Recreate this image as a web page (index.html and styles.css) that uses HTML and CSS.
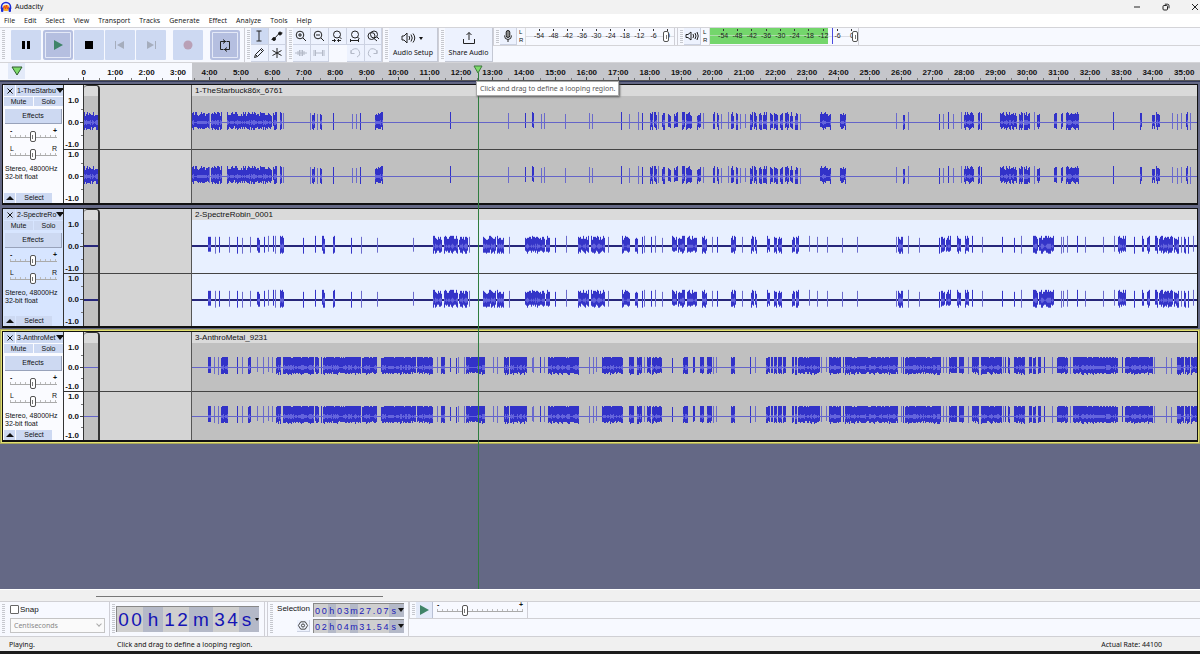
FILE: index.html
```html
<!DOCTYPE html>
<html lang="en">
<head>
<meta charset="utf-8">
<title>Audacity</title>
<link rel="stylesheet" href="styles.css">
</head>
<body>
<div class="app">
  <header class="titlebar">
    <svg class="logo" viewBox="0 0 12 12"><path d="M1.5 8V6a4.5 4.5 0 0 1 9 0v2" fill="none" stroke="#1b2bd8" stroke-width="1.6"/><rect x="3" y="4" width="6" height="6" rx="2" fill="#f7a821"/><path d="M3.5 7l1-2 1 3 1-4 1 4 1-2" stroke="#e8431c" stroke-width="1" fill="none"/><rect x="1" y="6.500" width="2.400" height="4.500" rx="1" fill="#1b2bd8"/><rect x="8.600" y="6.500" width="2.400" height="4.500" rx="1" fill="#1b2bd8"/></svg>
    <span class="apptitle">Audacity</span>
    <div class="winbtns">
      <button aria-label="Minimize"><svg viewBox="0 0 8 8"><path d="M1 4h6" /></svg></button>
      <button aria-label="Restore"><svg viewBox="0 0 8 8"><rect x="1" y="2.500" width="4.500" height="4.500" rx="1"/><path d="M2.800 1.200h2.700q1.500 0 1.500 1.500v2.600"/></svg></button>
      <button aria-label="Close"><svg viewBox="0 0 8 8"><path d="M1 1l6 6M7 1l-6 6"/></svg></button>
    </div>
  </header>
  <nav class="menu">
    <button>File</button><button>Edit</button><button>Select</button><button>View</button><button>Transport</button><button>Tracks</button><button>Generate</button><button>Effect</button><button>Analyze</button><button>Tools</button><button>Help</button>
  </nav>

  <section class="toolbars">
    <div class="grip first"></div>
    <div class="transport">
      <button class="tbtn" aria-label="Pause"><svg viewBox="0 0 30 30"><path d="M11 11h3v8h-3zM16 11h3v8h-3z"/></svg></button>
      <button class="tbtn on" aria-label="Play"><svg viewBox="0 0 30 30"><path d="M11 10l9 5-9 5z" fill="#3f8468"/></svg></button>
      <button class="tbtn" aria-label="Stop"><svg viewBox="0 0 30 30"><path d="M11 11h8v8h-8z"/></svg></button>
      <button class="tbtn" aria-label="Skip to start"><svg viewBox="0 0 30 30"><path d="M19 11v8l-7-4zM10 11h1v8h-1z" fill="#a5adbd"/></svg></button>
      <button class="tbtn" aria-label="Skip to end"><svg viewBox="0 0 30 30"><path d="M11 11v8l7-4zM19 11h1v8h-1z" fill="#a5adbd"/></svg></button>
      <button class="tbtn rec" aria-label="Record"><svg viewBox="0 0 30 30"><circle cx="15" cy="15" r="4.500" fill="#b9a0b6"/></svg></button>
      <button class="tbtn on loop" aria-label="Loop"><svg viewBox="0 0 30 30" fill="none" stroke="#222" stroke-width="1"><path d="M14 19.500h5.500v-8h-3M16 11.500h-5.500v8h3M13 9.500l2.500 2-2.500 2M17 17.500l-2.500 2 2.500 2"/></svg></button>
    </div>
    <div class="grip"></div>
    <div class="tools two">
      <button class="ic sel" aria-label="Selection tool"><svg viewBox="0 0 16 16"><path d="M5.500 3h5M5.500 13h5M8 3v10"/></svg></button>
      <button class="ic" aria-label="Envelope tool"><svg viewBox="0 0 16 16"><path d="M2.500 11.500h2l6-6.500h3"/><circle cx="5" cy="11" r="1.500" fill="#111"/><circle cx="11" cy="5.500" r="1.500" fill="#111"/></svg></button>
      <button class="ic" aria-label="Draw tool"><svg viewBox="0 0 16 16"><path d="M3.500 12.500l1-3 6-6 2 2-6 6zM9.500 4.500l2 2M4.500 9.500l2 2"/></svg></button>
      <button class="ic" aria-label="Multi-tool"><svg viewBox="0 0 16 16"><path d="M8 3v10M3.500 5.500l9 5M12.500 5.500l-9 5"/></svg></button>
    </div>
    <div class="grip"></div>
    <div class="tools five">
      <button class="ic" aria-label="Zoom in"><svg viewBox="0 0 16 16"><circle cx="7" cy="7" r="3.800"/><path d="M10 10l3 3M5 7h4M7 5v4"/></svg></button>
      <button class="ic" aria-label="Zoom out"><svg viewBox="0 0 16 16"><circle cx="7" cy="7" r="3.800"/><path d="M10 10l3 3M5 7h4"/></svg></button>
      <button class="ic" aria-label="Fit selection"><svg viewBox="0 0 16 16"><circle cx="8" cy="6.500" r="3.500"/><path d="M10.500 9l2 2M3 12.500h3.500M8.500 12.500H12M5 11l1.500 1.500L5 14M10 11l-1.500 1.500L10 14"/></svg></button>
      <button class="ic" aria-label="Fit project"><svg viewBox="0 0 16 16"><circle cx="8" cy="6.500" r="3.500"/><path d="M10.500 9l2 2M3 12.500h9M3.500 11v3M11.500 11v3"/></svg></button>
      <button class="ic" aria-label="Zoom toggle"><svg viewBox="0 0 16 16"><circle cx="9" cy="6.500" r="3.500"/><circle cx="6.500" cy="8" r="3.500"/><path d="M9 10.500l3 2.500M12 9l2 2"/></svg></button>
      <button class="ic dim" aria-label="Trim"><svg viewBox="0 0 16 16"><path d="M2 8h12M5 6v4M6.500 5v6M8 5v6M9.500 5v6M11 6v4"/></svg></button>
      <button class="ic dim" aria-label="Silence"><svg viewBox="0 0 16 16"><path d="M3 5v6M4.500 5v6M5 8h6M11.500 5v6M13 5v6"/></svg></button>
      <span></span>
      <button class="ic dim" aria-label="Undo"><svg viewBox="0 0 16 16"><path d="M4 5v3.500h3.500M4 8.500a4.300 4.300 0 1 1 6 3.500"/></svg></button>
      <button class="ic dim" aria-label="Redo"><svg viewBox="0 0 16 16"><path d="M12 5v3.500H8.500M12 8.500a4.300 4.300 0 1 0-6 3.500"/></svg></button>
    </div>
    <div class="grip"></div>
    <button class="big"><svg viewBox="0 0 26 14"><path d="M2 5h2l3-3v10l-3-3h-2zM9 5q1.500 2 0 4M11 3.500q2.500 3.500 0 7M13 2.500q3.500 4.500 0 9"/><path d="M19 6h4l-2 3z" fill="#111" stroke="none"/></svg>Audio Setup</button>
    <div class="grip"></div>
    <button class="big share"><svg viewBox="0 0 26 14"><path d="M7.500 8v4.500h11V8M13 9V1.500M10.500 4l2.500-2.500L15.500 4"/></svg>Share Audio</button>
    <div class="meters">
      <div class="meterrow">
        <div class="grip"></div>
        <button class="ic mic" aria-label="Record meter"><svg viewBox="0 0 16 16"><rect x="6.200" y="2.500" width="3.600" height="7" rx="1.800" fill="#888"/><path d="M4.500 7.500q0 4 3.500 4t3.500-4M8 11.500V14"/></svg></button>
        <div class="lr"><span>L</span><span>R</span></div>
        <div class="meter"><div class="scale"></div><input type="range" class="mthumb" aria-label="Recording level" value="100"></div>
        <div class="edge"></div>
        <div class="grip"></div>
        <button class="ic mic" aria-label="Playback meter"><svg viewBox="0 0 16 16"><path d="M2 6.500h2l3-2.500v8L4 9.500H2zM9 6q1.200 2 0 4M11 5q2 3 0 6M13 4q2.500 4 0 8"/></svg></button>
        <div class="lr"><span>L</span><span>R</span></div>
        <div class="meter play"><div class="level"></div><div class="peak"></div><div class="scale"></div><input type="range" class="mthumb" aria-label="Playback level" value="100"></div>
        <div class="edge"></div>
      </div>
    </div>
  </section>

  <section class="ruler">
    <button class="pin" aria-label="Timeline options"><svg viewBox="0 0 12 10"><path d="M1 1h10L6 9z" fill="#7edb6b" stroke="#2e5c2e"/></svg></button>
    <div class="rfill"></div>
    <div class="marks" id="marks"></div>
  </section>

  <main class="tracks" id="tracks">
    <div class="cursor"><svg viewBox="0 0 10 9"><path d="M1 1h8L5 8z" fill="#7edb6b" stroke="#3d7a3d"/></svg></div>
    <div class="tooltip">Click and drag to define a looping region.</div>
  </main>

  <div class="hscroll"><div></div></div>

  <section class="bottom">
    <div class="grip first"></div>
    <div class="snap">
      <label><input type="checkbox">Snap</label>
      <div class="pick"><select disabled aria-label="Snap to"><option>Centiseconds</option></select></div>
    </div>
    <div class="grip"></div>
    <div class="bigtime"><span>0</span><span>0</span><span class="u">h</span><span>1</span><span>2</span><span class="u m">m</span><span>3</span><span>4</span><span class="u s">s</span><span class="arr"></span></div>
    <div class="edge"></div>
    <div class="grip"></div>
    <div class="seltb">
      <div class="sellab"><span>Selection</span><button aria-label="Selection settings"><svg viewBox="0 0 12 12"><path d="M3.500 2h5L11 6 8.500 10h-5L1 6z"/><circle cx="6" cy="6" r="1.700"/></svg></button></div>
      <div class="seltimes"><div class="time" data-t="00h03m27.07s"></div><div class="time" data-t="02h04m31.54s"></div></div>
    </div>
    <div class="speed">
      <div class="speedrow">
        <div class="grip"></div>
        <button aria-label="Play at speed"><svg viewBox="0 0 16 16"><path d="M4 3l9 5-9 5z" fill="#3f8468"/></svg></button>
        <div class="slide sp"><div class="ends"><span>-</span><span>+</span></div><input type="range" value="31" aria-label="Playback speed"></div>
        <div class="edge"></div>
      </div>
    </div>
  </section>
  <footer class="status"><span class="st1">Playing.</span><span class="st2">Click and drag to define a looping region.</span><span class="rate">Actual Rate: 44100</span></footer>
  <div class="strip"></div>
</div>
<script src="app.js"></script>
</body>
</html>
```
FILE: styles.css
```css
*, *::before, *::after { box-sizing: border-box; }
body { margin: 0; font: 8px/10px "Liberation Sans", Arial, sans-serif; color: #111; }
button { font: inherit; color: inherit; border: 0; padding: 0; margin: 0; background: none; }
svg { display: block; }
input { margin: 0; }
.app { display: flex; flex-direction: column; min-height: 100vh; overflow: hidden; background: #f0f0f0; }

.titlebar { display: flex; align-items: center; height: 14px; background: #f2f2f2; font: 7px/14px "Noto Sans", sans-serif; }
.logo { width: 12px; height: 12px; margin-right: 3px; }
.apptitle { flex: 1; }
.winbtns { display: flex; gap: 21px; padding-right: 1px; }
.winbtns svg { width: 8px; height: 8px; fill: none; stroke: #222; stroke-width: 1; }
.menu { display: flex; gap: 9px; height: 13px; padding-left: 4px; background: #fff; font: 7px/13px "Open Sans", sans-serif; }

.toolbars { display: flex; height: 36px; background: #f7f9ff; border-top: 1px solid #d4d4d8; border-bottom: 1px solid #d4d4d8; }
.grip { flex: none; width: 7px; border-left: 1px solid #cfcfd6; background: repeating-linear-gradient(#c6c8ce 0 1px, #f7f9ff 1px 2px) 2px 2px / 3px calc(100% - 4px) no-repeat; }
.grip.first { border-left: 0; }
.edge { flex: none; width: 3px; border-left: 1px solid #cfcfd6; }
.transport { display: flex; gap: 1px; padding: 2px 4px; align-items: center; }
.tbtn { width: 30px; height: 30px; background: #cdd9f2; border-radius: 1px; }
.tbtn:first-child { margin-right: 1px; }
.tbtn.on { background: #b5bfe0; box-shadow: inset 0 0 0 2px #b5bfe0, inset 0 0 0 3px #e4e9f7; border-radius: 3px; }
.tbtn.rec { margin: 0 5px 0 6px; }
.tbtn.loop { margin-left: 1px; }
.tools { display: grid; grid-auto-rows: 17px; }
.two { grid-template-columns: 18px 17px; }
.five { grid-template-columns: repeat(4, 18px) 17px; }
.ic { background: #edf2fe; border-right: 1px solid #ccd2e2; border-bottom: 1px solid #ccd2e2; }
.ic svg { width: 16px; height: 16px; fill: none; stroke: #222; stroke-width: 1; }
.ic.sel { background: #cdd9f2; }
.ic.dim svg { stroke: #b4bac8; }
.big { flex: none; width: 49px; display: flex; flex-direction: column; align-items: center; justify-content: space-evenly; background: #edf2fe; border-right: 1px solid #c4c8d4; border-bottom: 1px solid #c4c8d4; font: 7px/10px "Noto Sans", sans-serif; white-space: nowrap; }
.big svg { width: 26px; height: 14px; fill: none; stroke: #222; }
.share { width: 48px; }
.meters { flex: 1; }
.meterrow { display: flex; height: 18px; border-bottom: 1px solid #d4d4d8; }
.mic { width: 17px; height: 17px; }
.lr { display: flex; flex-direction: column; width: 8px; padding-left: 2px; font-size: 6px; line-height: 8px; }
.meter { position: relative; width: 149px; height: 17px; background: linear-gradient(#dadce4, #dadce4) 0 8px / 100% 1px no-repeat; border-left: 1px solid #ddd; }
.scale { position: relative; display: grid; grid-template-columns: repeat(10, 1fr); margin-left: 6px; margin-right: -1px; text-align: center; font-size: 7px; line-height: 10px; color: #222; }
.scale span::before { content: ""; display: block; width: 1px; height: 2px; margin: 1px auto 0; background: #333; }
.level { position: absolute; left: 0; top: 0; width: 118px; height: 16px; background: linear-gradient(#74d66c 0 7px, #aedcaa 7px 8px, #74d66c 8px); }
.peak { position: absolute; left: 122px; top: 0; width: 1px; height: 16px; background: #4b4be0; }
.mthumb { position: absolute; left: 0; top: 2px; width: 143px; height: 13px; appearance: none; background: none; }
.meter.play .mthumb { width: 148px; }
input[type=range]::-webkit-slider-thumb { appearance: none; width: 6px; height: 11px; border: 1px solid #555; border-radius: 2px; background: linear-gradient(#777, #777) center / 1px 4px no-repeat #fff; }

.ruler { position: relative; display: flex; height: 18px; background: #f7f9ff; border-bottom: 1px solid #555; }
.pin { width: 17px; height: 16px; margin-left: 8px; background: #e3eaf9; display: grid; place-items: center; }
.pin svg { width: 12px; height: 10px; }
.rfill { flex: 1; margin-left: 167px; background: #c5c6cb; }
.marks { position: absolute; inset: 0 0 0 68px; display: grid; grid-template-columns: repeat(36, 1fr); font-weight: bold; font-size: 8px; line-height: 15px; text-align: center; padding-top: 2px; }
.marks span { white-space: nowrap; overflow: hidden; background: linear-gradient(#444, #444) 50% 100% / 1px 3px no-repeat, linear-gradient(#777, #777) 0 100% / 1px 2px no-repeat; }

.tracks { position: relative; flex: 1; display: flex; flex-direction: column; gap: 3px; padding: 2px 2px 0; background: #646885; border-top: 1px solid #333a5c; }
.track { display: grid; grid-template-columns: 61px 20px 1fr; grid-template-rows: minmax(0, 1fr); height: 120px; border: 1px solid #111; border-width: 1px 1px 2px; background: #fafbff; }
.track:first-child { height: 121px; }
.track.focus { height: 111px; box-shadow: 0 0 0 1px #e2e070, 0 0 0 2px #aaa85e; }
.panel { display: flex; flex-direction: column; padding-left: 1px; border-right: 1px solid #333; font-size: 7px; line-height: 8px; }
.lit .panel, .lit .vruler { background: #d7e5ff; }
.hd { display: grid; grid-template-columns: 11px 1fr; gap: 1px; }
.panel button { background: #cdd9f2; }
.hd button { height: 11px; white-space: nowrap; overflow: hidden; }
.hd .x svg { width: 6px; height: 6px; margin: auto; stroke: #111; }
.nm { display: flex; align-items: center; justify-content: space-between; padding: 0 1px; }
.nm::after { content: ""; flex: none; width: 0; border: 4px solid transparent; border-top: 5px solid #111; border-bottom: 0; }
.ms { display: grid; grid-template-columns: 1fr 1fr; gap: 1px; margin-top: 1px; }
.ms button { height: 9px; }
.panel .fx { height: 15px; margin: 3px 1px 4px; border-right: 1px solid #98a2ba; border-bottom: 1px solid #98a2ba; }
.slide { margin: 0 6px; height: 18px; }
.slide .ends { display: flex; justify-content: space-between; height: 5px; line-height: 6px; font-size: 7px; font-weight: bold; }
.lrs .ends { font-weight: normal; }
.slide input { display: block; width: 100%; height: 11px; margin-top: -2px; appearance: none; background: linear-gradient(#aaa, #aaa) 0 6px / 100% 1px no-repeat, repeating-linear-gradient(90deg, #bbb 0 1px, transparent 1px 5px) 0 4px / 100% 3px no-repeat; }
.info { flex: 1; margin-top: 1px; padding-left: 1px; white-space: nowrap; }
.foot { display: grid; grid-template-columns: 11px 36px; gap: 1px; }
.foot button { height: 10px; }
.foot .up::before { content: ""; display: block; width: 0; margin: auto; border: 4px solid transparent; border-bottom: 4px solid #111; border-top: 0; }
.vruler { display: flex; flex-direction: column; padding-top: 11px; border-right: 1px solid #333; font-weight: bold; font-size: 8px; line-height: 9px; text-align: right; }
.vch { flex: 1; display: flex; flex-direction: column; justify-content: space-between; padding-right: 4px; background: linear-gradient(#444, #444) 100% 50% / 3px 1px no-repeat, linear-gradient(#777, #777) 100% 25% / 2px 1px no-repeat, linear-gradient(#777, #777) 100% 75% / 2px 1px no-repeat; }
.vch + .vch { border-top: 1px solid #333; }
.clips { display: grid; grid-template-columns: 16fr 92fr 1005fr; grid-template-rows: minmax(0, 1fr); min-width: 0; background: #d4d4d4; }
.clip { display: flex; flex-direction: column; min-width: 0; background: #c0c0c0; overflow: hidden; }
.clip.short { border-right: 2px solid #333; border-top: 1px solid #333; border-radius: 4px 4px 0 0; }
.clip.short .cliphd { height: 10px; }
.cliphd { flex: none; height: 11px; padding-left: 3px; background: #dadada; white-space: nowrap; line-height: 11px; }
.chan { position: relative; flex: 1; min-height: 0; }
.chan + .chan, .void div + div { border-top: 1px solid #444; }
.void { display: flex; flex-direction: column; padding-top: 11px; border-right: 1px solid #555; }
.void div { flex: 1; }
.chan svg { position: absolute; inset: 0; width: 100%; height: 100%; shape-rendering: crispEdges; }
.lit .clip.long { background: #e8f0ff; }
.peakwave { stroke: #3232c8; }
.thinwave { stroke: #6a6acc; }
.rms { stroke: #6464dc; }
.axis { stroke: #6464c8; }
.lit .axis { stroke: #26267a; stroke-width: 2; }
.cursor { position: absolute; left: 478px; top: -17px; bottom: 0; width: 1px; background: linear-gradient(#2f7d3f, #2f7d3f) 0 8px no-repeat; }
.cursor svg { width: 10px; height: 9px; margin-left: -5px; }
.tooltip { position: absolute; left: 476px; top: -1px; padding: 0 3px; border: 1px solid #aaa; background: #fff; box-shadow: 1px 1px 2px #555; color: #575757; font: 7px/13px "Noto Sans", sans-serif; white-space: nowrap; }

.hscroll { height: 12px; padding: 6px 0 0 8%; border-top: 1px solid #fff; }
.hscroll div { width: 26%; height: 1px; background: #777; }
.bottom { display: flex; height: 36px; background: #f7f9ff; border-top: 1px solid #d0d0d4; border-bottom: 1px solid #d0d0d4; }
.snap { display: flex; flex-direction: column; gap: 4px; width: 102px; padding: 3px 4px 0 3px; }
.snap label { display: flex; align-items: center; gap: 1px; line-height: 9px; }
.snap input { width: 9px; height: 9px; appearance: none; border: 1px solid #666; border-radius: 1px; background: #fff; }
.pick { position: relative; display: flex; }
.pick::after { content: ""; position: absolute; right: 4px; top: 4px; width: 4px; height: 4px; border: 1px solid #aaa; border-width: 0 1px 1px 0; transform: rotate(45deg); }
.snap select { flex: 1; height: 15px; padding: 0 3px; appearance: none; border: 1px solid #c4c4c4; border-radius: 0; color: #888; opacity: 1; font: 7px/13px "Noto Sans", sans-serif; background: #fafafa; }
.bigtime { display: flex; align-self: flex-start; height: 26px; margin: 4px 5px 0 0; border-top: 1px solid #888; border-left: 1px solid #888; background: #cfcfcf; font-size: 19px; line-height: 26px; color: #1414b4; }
.bigtime span { width: 13px; text-align: center; }
.u { background: #b4b9c8; }
.bigtime .u { width: 20px; }
.bigtime .m { width: 24px; }
.bigtime .s { width: 15px; }
.bigtime .arr { width: 5px; }
.arr { background: #b4b9c8; }
.arr::after { content: ""; display: block; margin: 11px auto 0; width: 0; border: 2px solid transparent; border-top: 3px solid #111; border-bottom: 0; }
.seltb { display: flex; gap: 3px; padding: 1px 4px 0 3px; border-right: 1px solid #d0d0d4; }
.sellab { display: flex; flex-direction: column; justify-content: space-between; align-items: flex-end; line-height: 11px; padding-bottom: 4px; width: 33px; }
.sellab button { background: #edf2fe; border-right: 1px solid #ccd2e2; border-bottom: 1px solid #ccd2e2; }
.sellab svg { width: 12px; height: 11px; fill: none; stroke: #333; }
.seltimes { display: flex; flex-direction: column; gap: 2px; }
.time { display: flex; height: 14px; width: 91px; border-top: 1px solid #888; border-left: 1px solid #888; background: #cfcfcf; color: #2020b8; font-size: 9px; line-height: 14px; }
.time span { flex: 7; text-align: center; }
.time .u { flex: 9; }
.time .dot { flex: 4; }
.time .arr { flex: none; width: 6px; }
.time .arr::after { margin-top: 4px; border-width: 4px 3px 0; }
.speed { flex: 1; }
.speedrow { display: flex; height: 17px; border-bottom: 1px solid #d0d0d4; }
.speedrow button { width: 17px; height: 16px; background: #e3eaf9; border-right: 1px solid #b8c0d4; }
.speedrow svg { width: 16px; height: 16px; }
.sp { width: 86px; margin: 0 4px; height: 16px; }
.status { display: flex; height: 14px; font: 7px/15px "Noto Sans", sans-serif; }
.st1 { width: 117px; padding-left: 9px; }
.st2 { flex: 1; }
.rate { padding-right: 38px; }
.strip { height: 3px; background: #1c1c1c; }
```
FILE: app.js
```js
const CLIP_START = 192, CLIP_WIDTH = 1005;

// Bursts of sound as "from-to" pairs or single positions on the timeline.
const tracks = [
  { name: "1-TheStarbu", clip: "1-TheStarbuck86x_6761", cls: "", h: 53, up: 10, down: 8, short: true,
    data: "192-208 209-209 211-221 227-246 247-271 273-276 280-281 283 310 312-314 317 320-321 333 352 356 360 375-382 450 508 525 532-533 541 544 565 589 592 621 629 638 642 650-652 654-656 658 662-664 668-670 674-677 682-684 686-691 697-700 703 713-714 717-718 721 728 731-733 736-737 740 745 750-752 754-756 759-761 763-766 770-772 774-777 780-782 785-788 790-792 795-797 800 820-830 840-845 896 903-904 908 939 943 948 953 961 964-966 967-973 978-979 981 1000-1016 1019-1022 1024-1029 1034 1037-1039 1054-1056 1061-1062 1066-1078 1113 1140-1141 1152-1154 1156-1159 1172 1177 1181 1186-1187 1190" },
  { name: "2-SpectreRo", clip: "2-SpectreRobin_0001", cls: "lit", h: 53, up: 10, down: 8,
    data: "208-210 215 219 229 237 242 250 257-259 264 268 273 275 280-283 303 315 322-324 333-334 351 361 377 413 433-441 444-457 459-467 469 483-495 497-503 509 525-544 546-549 555 566 578-588 591-604 608 622-629 635-637 642 644 651 655 662 672-676 678-684 687-696 702-706 712 717 731-735 742 751-753 755-756 767-769 774-776 778-781 792-794 796-798 809 817 827 842 857 896 898-902 908 919 939 941-944 946-950 957-960 965-968 972 982 1002 1014 1021 1033-1037 1039-1053 1061 1063 1067 1077 1085 1103 1114 1118-1125 1134 1142-1143 1147-1149 1155-1157 1159-1172 1174-1178 1181 1184-1185 1188 1193" },
  { name: "3-AnthroMet", clip: "3-AnthroMetal_9231", cls: "focus", h: 48, up: 10, down: 7, flat: true,
    data: "208-210 214 218 221-227 237 242 248-250 257 263 268 272 276-280 283-313 315-318 321 323-360 362-376 381-410 411-415 417-432 437 441-444 450 456 458 464 466-484 493 497 504-508 510-526 532 533 540 544 548-578 589 593 596 602-622 629-633 637-641 644 647-650 652-661 672 683-687 693-694 700-703 707-711 713 716 731-734 750 755 766-769 771-772 774-776 778-781 783-785 792-793 795-796 798-819 821 826 829-840 843 845-897 901 903 905-940 943 946 949-956 959-963 968 972-978 981-1001 1003 1005 1008-1009 1014-1024 1029-1031 1033-1035 1038-1040 1044 1052 1057-1067 1070 1073-1117 1122 1125-1152 1154 1166 1171 1177-1183 1185-1189 1191-1196" }
];

function noise(n) {
  const v = Math.sin(n * 127.1) * 43758.5453;
  return v - Math.floor(v);
}

function wave(t, from, width, data) {
  const mid = Math.floor(t.h / 2);
  let solid = "", thin = "", rms = "";
  for (const item of data.split(" ").filter(Boolean)) {
    const [a, b = a] = item.split("-").map(Number);
    for (let x = a; x <= b; x++) {
      const single = a === b;
      const r = noise(x), q = noise(x + 5000);
      const up = t.flat ? t.up - (r > .85 ? 1 : 0) : t.up * (single ? .8 + .2 * r : .6 + .45 * r);
      const down = t.down * (t.flat ? .75 + .35 * q : single ? .8 + .2 * q : .55 + .5 * q);
      const px = x - from + .5;
      const seg = `M${px} ${Math.round(mid - up)}V${Math.round(mid + down)}`;
      if (single && x % 3) thin += seg; else solid += seg;
      const k = single ? 0 : Math.round(2 * q);
      rms += `M${px} ${mid - k}V${mid + k + 1}`;
    }
  }
  return `<div class="chan"><svg viewBox="0 0 ${width} ${t.h}" preserveAspectRatio="none"><path class="axis" d="M0 ${mid + .5}H${width}"/><path class="peakwave" d="${solid}"/><path class="thinwave" d="${thin}"/><path class="rms" d="${rms}"/></svg></div>`;
}

const vch = '<div class="vch"><span>1.0</span><span>0.0</span><span>-1.0</span></div>';
const html = tracks.map(t => {
  const short = wave(t, 84, 14, t.short ? "84-97" : "");
  const long = wave(t, CLIP_START, CLIP_WIDTH, t.data);
  return `<section class="track ${t.cls}">
    <div class="panel">
      <div class="hd"><button class="x" aria-label="Close track"><svg viewBox="0 0 6 6"><path d="M.5.5l5 5M5.500.5l-5 5"/></svg></button><button class="nm">${t.name}</button></div>
      <div class="ms"><button>Mute</button><button>Solo</button></div>
      <button class="fx">Effects</button>
      <div class="slide"><div class="ends"><span>-</span><span>+</span></div><input type="range" value="48" aria-label="Gain"></div>
      <div class="slide lrs"><div class="ends"><span>L</span><span>R</span></div><input type="range" value="48" aria-label="Pan"></div>
      <div class="info">Stereo, 48000Hz<br>32-bit float</div>
      <div class="foot"><button class="up" aria-label="Collapse"></button><button>Select</button></div>
    </div>
    <div class="vruler">${vch}${vch}</div>
    <div class="clips">
      <div class="clip short"><div class="cliphd"></div>${short}${short}</div>
      <div class="void"><div></div><div></div></div>
      <div class="clip long"><div class="cliphd">${t.clip}</div>${long}${long}</div>
    </div>
  </section>`;
}).join("");
document.getElementById("tracks").insertAdjacentHTML("afterbegin", html);

document.getElementById("marks").innerHTML =
  Array.from({ length: 36 }, (_, m) => `<span>${m ? m + ":00" : "0"}</span>`).join("");

for (const s of document.querySelectorAll(".scale"))
  s.innerHTML = [-54, -48, -42, -36, -30, -24, -18, -12, -6, 0].map(v => `<span>${v}</span>`).join("");

for (const el of document.querySelectorAll(".time"))
  el.innerHTML = [...el.dataset.t].map(c =>
    `<span class="${/[hms]/.test(c) ? "u" : c === "." ? "dot" : ""}">${c}</span>`).join("") + '<span class="arr"></span>';
```
